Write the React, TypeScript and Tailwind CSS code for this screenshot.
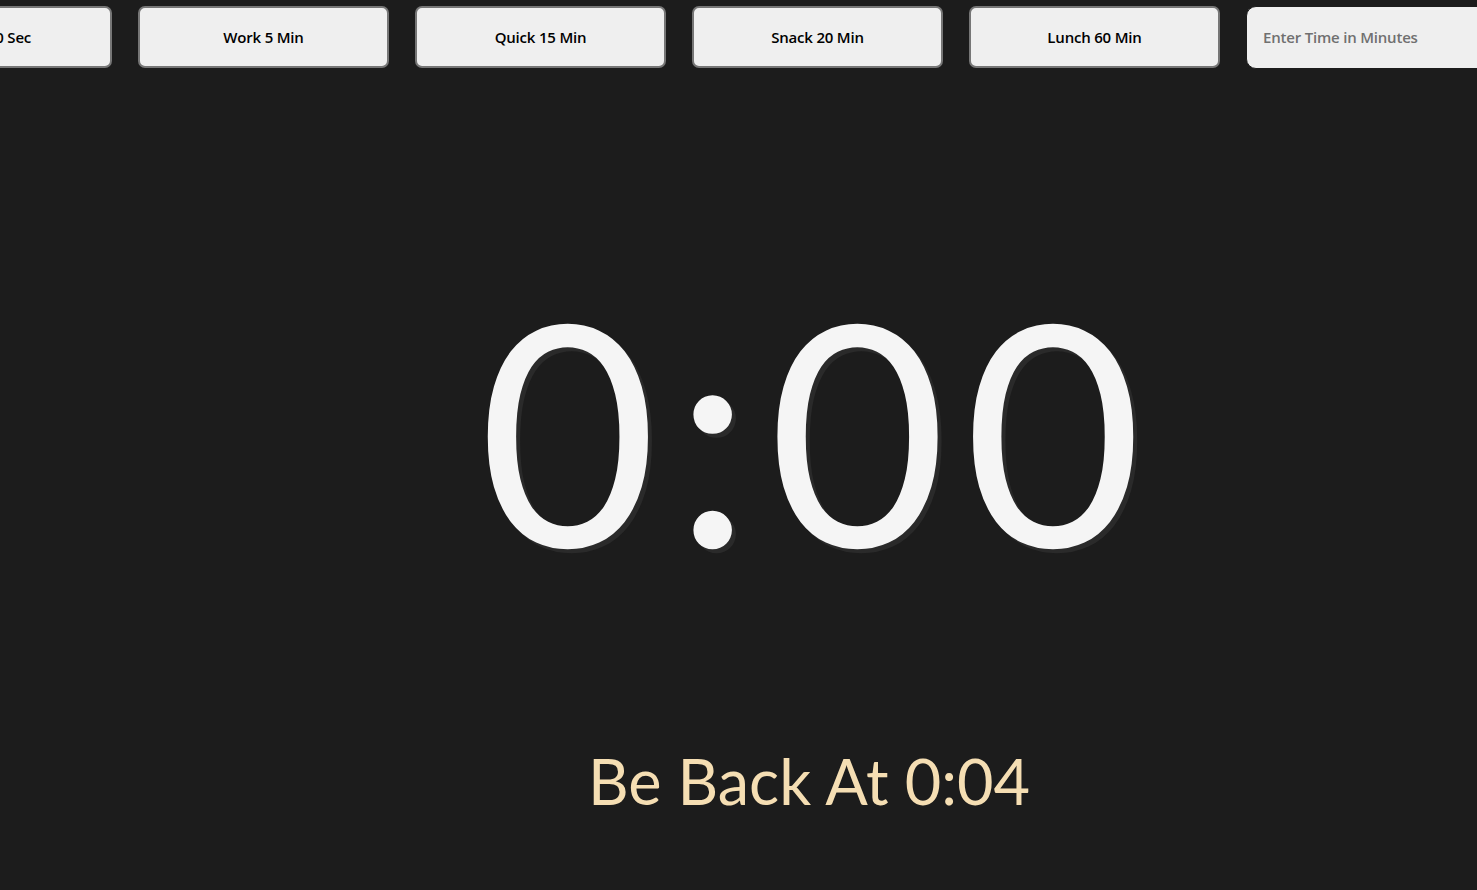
import React from "react";

const presets = ["Break 30 Sec", "Work 5 Min", "Quick 15 Min", "Snack 20 Min", "Lunch 60 Min"];

export default function App() {
  return (
    <div
      className="w-[1477px] h-[890px] overflow-hidden bg-[#1c1c1c] relative"
      style={{ fontFamily: '"Open Sans", "Noto Sans", sans-serif' }}
    >
      <div className="w-full flex justify-center gap-[26px] pt-[6px]">
        {presets.map((p) => (
          <button
            key={p}
            className="shrink-0 w-[251px] h-[62px] rounded-[7px] bg-[#efefef] border-2 border-[#767676] text-black text-[15px] font-semibold tracking-[-0.2px]"
          >
            {p}
          </button>
        ))}
        <input
          placeholder="Enter Time in Minutes"
          className="shrink-0 w-[370px] h-[63px] rounded-[10px] bg-[#efefef] border border-[#1c1c1c] pl-[16px] pb-[2px] text-[15px] font-semibold tracking-[-0.2px] text-black placeholder:text-[#707070] outline-none"
        />
      </div>
      <div className="w-[1618px] flex flex-col items-center font-['Lato',sans-serif]">
        <div
          className="mt-[199px] text-[308px] leading-[320px] text-[#f5f5f5] tracking-[17px] pl-[20px]"
          style={{ textShadow: "4px 4px 0 #2a2a2a" }}
        >
          0:00
        </div>
        <div className="mt-[153px] text-[63px] leading-[80px] text-[#f5deb3]">
          Be Back At 0:04
        </div>
      </div>
    </div>
  );
}
